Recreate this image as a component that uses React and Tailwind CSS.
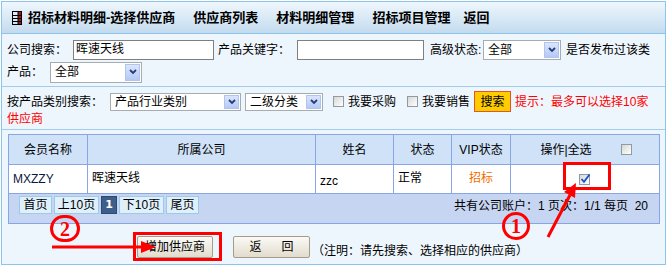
import React from 'react';

function LedgerIcon() {
  return (
    <svg width="10" height="14" viewBox="0 0 10 14">
      <rect x="6" y="0.5" width="3.5" height="13" fill="#9c1c1c" />
      <rect x="0.5" y="0.5" width="9" height="13" fill="none" stroke="#000" />
      <path d="M0.5 4.5 H9.5 M0.5 7.5 H9.5 M0.5 10.5 H9.5 M6 0.5 V13.5" stroke="#000" strokeWidth="1" />
    </svg>
  );
}

function FakeSelect({ className, text }) {
  return (
    <div className={'flex items-stretch bg-white border border-[#a5acb2] p-px ' + className}>
      <span className="flex-1 flex items-center pl-[3px]">{text}</span>
      <span className="w-[15px] flex items-center justify-center bg-linear-to-b from-[#dbe5fd] to-[#b5c9f5] border border-[#b1c4ee]">
        <svg width="8" height="6" viewBox="0 0 8 6">
          <path d="M1 1 L4 4 L7 1" stroke="#233e7a" strokeWidth="1.8" fill="none" />
        </svg>
      </span>
    </div>
  );
}

function Box({ checked }) {
  return (
    <span className="relative inline-flex w-[11px] h-[11px] shrink-0 border border-[#8e9aa8] bg-linear-to-br from-[#d8d8d2] to-white">
      {checked && (
        <svg className="absolute -left-px -top-[2px]" width="12" height="12" viewBox="0 0 12 12">
          <path d="M2.5 6 L5 8.8 L10.5 1.5" stroke="#1a4fd0" strokeWidth="1.8" fill="none" />
        </svg>
      )}
    </span>
  );
}

function PageBtn({ className, children }) {
  return (
    <span className={'h-[18px] flex items-center justify-center border border-[#9ccaeb] bg-[#e0f0fb] ' + className}>
      {children}
    </span>
  );
}

export default function App() {
  return (
    <div className="relative w-[668px] h-[267px] pt-px pl-px bg-white text-[12px] leading-[14px] text-black font-['Liberation_Sans','Noto_Sans_CJK_SC',sans-serif]">
      <div className="w-[665px] h-[264px] border border-[#8cc4ec] bg-[#eef6fd]">
        {/* title bar */}
        <div className="h-[32px] flex items-center border-b border-[#8cc4ec] bg-linear-to-b from-[#eff7fd] to-[#c3dbee] pl-[10px] font-bold text-[13px] leading-[16px]">
          <LedgerIcon />
          <span className="ml-[6px]">招标材料明细-选择供应商</span>
          <span className="ml-[18px]">供应商列表</span>
          <span className="ml-[18px]">材料明细管理</span>
          <span className="ml-[18px]">招标项目管理</span>
          <span className="ml-[13px]">返回</span>
        </div>

        {/* search form */}
        <div className="pl-[5px] pt-[6px]">
          <div className="flex items-center h-[20px]">
            <span className="w-[66px]">公司搜索：</span>
            <div className="w-[141px] h-[20px] bg-white border border-[#7f7f7f] pl-[2px] pt-px">晖速天线</div>
            <span className="ml-[4px] w-[79px]">产品关键字：</span>
            <div className="w-[127px] h-[20px] bg-white border border-[#7f7f7f]"></div>
            <span className="ml-[6px] w-[53px]">高级状态:</span>
            <FakeSelect className="w-[78px] h-[20px]" text="全部" />
            <span className="ml-[5px] whitespace-nowrap">是否发布过该类</span>
          </div>
          <div className="flex items-center mt-[1px] h-[22px]">
            <span className="w-[43px]">产品：</span>
            <FakeSelect className="w-[92px] h-[21px]" text="全部" />
          </div>
        </div>
        <div className="mt-[3px] h-px bg-[#a3cbee]"></div>

        <div className="pl-[5px] pt-[4px]">
          <div className="flex items-center h-[21px]">
            <span className="w-[103px]">按产品类别搜索：</span>
            <FakeSelect className="w-[131px] h-[18px]" text="产品行业类别" />
            <FakeSelect className="ml-[4px] w-[78px] h-[18px]" text="二级分类" />
            <span className="ml-[10px] flex"><Box /></span>
            <span className="ml-[4px]">我要采购</span>
            <span className="ml-[11px] flex"><Box /></span>
            <span className="ml-[4px]">我要销售</span>
            <span className="ml-[4px] w-[37px] h-[21px] flex items-center justify-center bg-[#ffcc00] border border-[#e4542c]">搜索</span>
            <span className="ml-[4px] text-[#ff0000] whitespace-nowrap">提示：最多可以选择10家</span>
          </div>
          <div className="text-[#ff0000] leading-[13px] mt-px">供应商</div>
        </div>
        <div className="mt-[3px] h-px bg-[#a3cbee]"></div>

        {/* results table */}
        <div className="ml-[6px] mt-[4px] w-[652px] border border-[#8aa5e4] bg-white">
          <div className="grid grid-cols-[78px_228px_78px_58px_59px_149px] h-[30px] bg-[#cfe2f8] border-b border-[#8aa5e4]">
            <div className="flex items-center justify-center">会员名称</div>
            <div className="flex items-center justify-center border-l border-[#8aa5e4]">所属公司</div>
            <div className="flex items-center justify-center border-l border-[#8aa5e4]">姓名</div>
            <div className="flex items-center justify-center border-l border-[#8aa5e4]">状态</div>
            <div className="flex items-center justify-center border-l border-[#8aa5e4]">VIP状态</div>
            <div className="flex items-center justify-center border-l border-[#8aa5e4] pl-[2px]">
              <span>操作|全选</span>
              <span className="ml-[29px] flex"><Box /></span>
            </div>
          </div>
          <div className="grid grid-cols-[78px_228px_78px_58px_59px_149px] h-[29px] border-b border-[#8aa5e4]">
            <div className="flex items-center pl-[4px] text-[#0c1740]">MXZZY</div>
            <div className="flex items-center pl-[4px] border-l border-[#8aa5e4] pb-[2px]">晖速天线</div>
            <div className="flex items-center pl-[4px] pt-[3px] border-l border-[#8aa5e4]">zzc</div>
            <div className="flex items-center pl-[4px] pb-[2px] border-l border-[#8aa5e4]">正常</div>
            <div className="flex items-center justify-center pb-[2px] border-l border-[#8aa5e4] text-[#f46c00]">招标</div>
            <div className="flex items-center justify-center border-l border-[#8aa5e4] pr-[2px]"><Box checked /></div>
          </div>
          <div className="h-[29px] bg-[#c6d5f1] flex items-start justify-between pl-[10px] pr-[11px] pt-[2px]">
            <div className="flex gap-[2px]">
              <PageBtn className="w-[33px]">首页</PageBtn>
              <PageBtn className="w-[45px]">上10页</PageBtn>
              <span className="w-[16px] h-[18px] flex items-center justify-center bg-[#3f5f8b] border border-[#2c4a72] text-white font-bold font-['DejaVu_Sans',sans-serif] text-[11px]">1</span>
              <PageBtn className="w-[45px]">下10页</PageBtn>
              <PageBtn className="w-[33px]">尾页</PageBtn>
            </div>
            <span className="mt-[3px] whitespace-pre">共有公司账户：1 页次：1/1 每页  20</span>
          </div>
        </div>

        {/* actions */}
        <div className="flex items-center mt-[12px] pl-[135px]">
          <span className="w-[76px] h-[22px] flex items-center justify-center rounded-[2px] border border-[#a49d8c] bg-linear-to-b from-[#fbfaf6] to-[#e2dccd]">增加供应商</span>
          <span className="ml-[20px] w-[77px] h-[22px] flex items-center justify-center gap-[20px] rounded-[2px] border border-[#a49d8c] bg-linear-to-b from-[#fbfaf6] to-[#e2dccd]">
            <span>返</span>
            <span>回</span>
          </span>
          <span className="ml-[2px] mt-[8px] whitespace-nowrap">（注明：请先搜索、选择相应的供应商）</span>
        </div>
      </div>

      {/* red annotations */}
      <div className="absolute left-[563px] top-[162px] w-[48px] h-[28px] border-[3px] border-[#ff0000]"></div>
      <div className="absolute left-[133px] top-[232px] w-[89px] h-[29px] border-[3px] border-[#ff0000]"></div>
      <div className="absolute left-[502px] top-[212px] w-[28px] h-[28px] rounded-full border-[3px] border-[#ff0000] flex items-center justify-center text-[#ff0000] font-bold font-['Liberation_Serif',serif] text-[20px] leading-[20px]">1</div>
      <div className="absolute left-[50px] top-[215px] w-[30px] h-[27px] rounded-full border-[3px] border-[#ff0000] flex items-center justify-center text-[#ff0000] font-bold font-['Liberation_Serif',serif] text-[20px] leading-[20px]">2</div>
      <svg className="absolute left-0 top-0 pointer-events-none" width="668" height="267" viewBox="0 0 668 267">
        <line x1="548" y1="237" x2="570" y2="195" stroke="#ff0000" strokeWidth="3" />
        <polygon points="576,183 575,198 564,192" fill="#ff0000" />
        <line x1="52" y1="247" x2="143" y2="247" stroke="#ff0000" strokeWidth="3" />
        <polygon points="156,247 141,241 141,253" fill="#ff0000" />
      </svg>
    </div>
  );
}
